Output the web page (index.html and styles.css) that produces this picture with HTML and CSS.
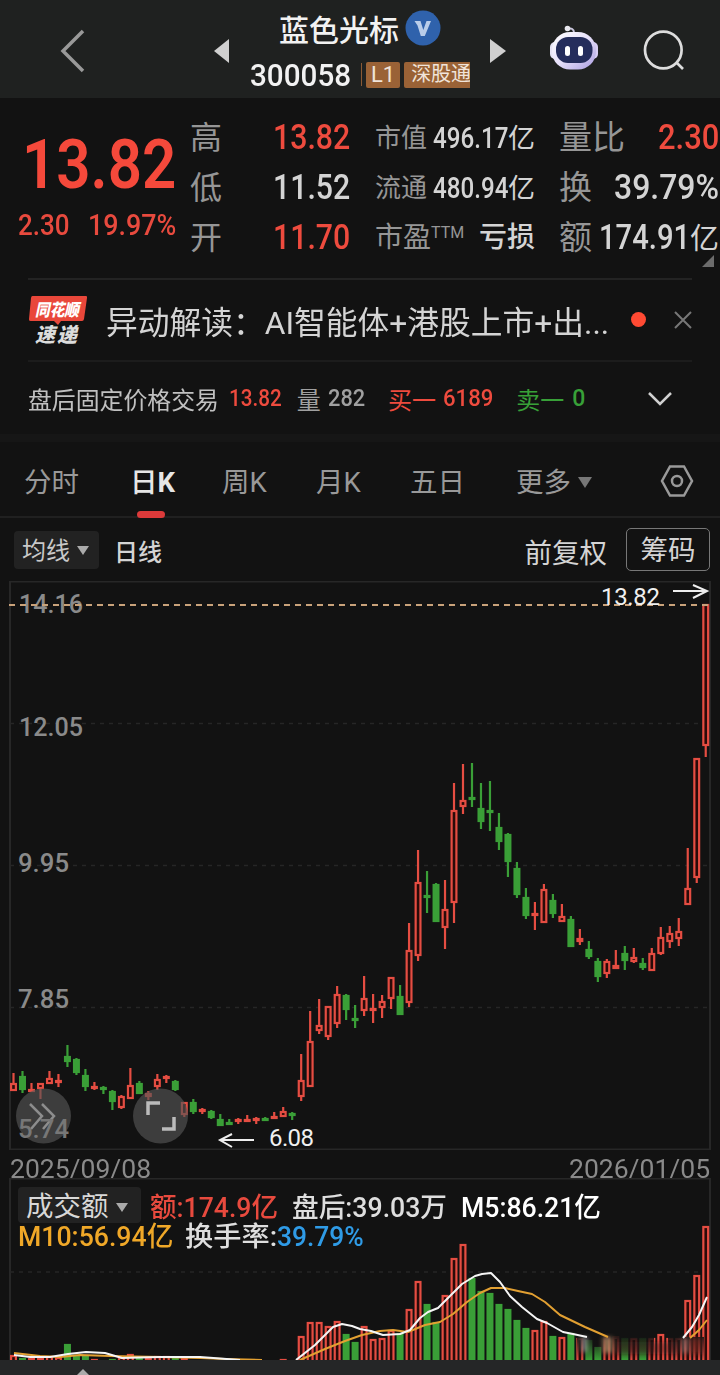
FILE: index.html
```html
<!DOCTYPE html>
<html lang="zh-CN">
    <head>
        <meta charset="utf-8">
        <title>蓝色光标 300058</title>
        <link rel="stylesheet" href="styles.css">
    </head>
    <body>
        <header class="topbar">
            <svg class="back" width="26" height="44" viewBox="0 0 26 44"><path d="M23 2L3 22L23 42"/></svg>
            <svg class="prev" width="16" height="24" viewBox="0 0 16 24"><path d="M15 0V24L0 12Z"/></svg>
            <div class="stock">
                <div class="stock-name">
                    <span class="fit" data-w="120">蓝色光标</span>
                    <svg width="36" height="36" viewBox="0 0 36 36"><circle cx="18" cy="18" r="17.500" fill="#2f62ac"/><path d="M9.500 11H15.500L18.300 20L21.500 11H26L19.800 26H15.800L12.500 15.500Z" fill="#b9cdea"/></svg>
                </div>
                <div class="stock-code">
                    <span class="fit num" data-w="101">300058</span>
                    <i class="bar"></i>
                    <span class="tag l1">L1</span>
                    <span class="tag sgt">深股通</span>
                </div>
            </div>
            <svg class="next" width="16" height="24" viewBox="0 0 16 24"><path d="M0 0V24L16 12Z"/></svg>
            <svg class="robot" width="50" height="46" viewBox="549 26 50 46">
                <defs>
                    <linearGradient id="head" x1="0" y1="0" x2="1" y2="1"><stop offset="0" stop-color="#fff"/><stop offset=".5" stop-color="#e6e0fa"/><stop offset="1" stop-color="#a99be0"/></linearGradient>
                </defs>
                <path d="M567 30Q574 28 574 34" fill="none" stroke="#c9c6dc" stroke-width="2"/>
                <circle cx="567.500" cy="29.500" r="2.800" fill="#e8e8ee"/>
                <rect x="550" y="43" width="10" height="17" rx="5" fill="#e6e3f4"/>
                <rect x="588" y="43" width="10" height="17" rx="5" fill="#d9cff5"/>
                <rect x="552" y="33" width="44" height="37.500" rx="18" fill="url(#head)"/>
                <rect x="556" y="38" width="36.500" height="26" rx="12" fill="#252d5c"/>
                <rect x="565" y="47" width="5" height="10" rx="2.500" fill="#fff"/>
                <rect x="578" y="47" width="5" height="10" rx="2.500" fill="#fff"/>
            </svg>
            <svg class="search" width="42" height="42" viewBox="643 29 42 42"><circle cx="663.300" cy="50" r="18.300"/><path d="M676 62L683 69"/></svg>
        </header>

        <section class="quote">
            <div class="price">
                <div class="now"><span class="fit num" data-w="154">13.82</span></div>
                <div class="change">
                    <span class="fit num" data-w="52">2.30</span>
                    <span class="fit num" data-w="88">19.97%</span>
                </div>
            </div>
            <dl class="cells c1">
                <dt>高</dt><dd class="up"><span class="fit num" data-w="77">13.82</span></dd>
                <dt>低</dt><dd><span class="fit num" data-w="77">11.52</span></dd>
                <dt>开</dt><dd class="up"><span class="fit num" data-w="77">11.70</span></dd>
            </dl>
            <dl class="cells c2">
                <dt>市值</dt><dd><span class="fit num" data-w="75">496.17</span>亿</dd>
                <dt>流通</dt><dd><span class="fit num" data-w="75">480.94</span>亿</dd>
                <dt class="pe">市盈<sup>TTM</sup></dt><dd class="loss">亏损</dd>
            </dl>
            <dl class="cells c3">
                <dt>量比</dt><dd class="up"><span class="fit num" data-w="61">2.30</span></dd>
                <dt>换</dt><dd><span class="fit num" data-w="105">39.79%</span></dd>
                <dt>额</dt><dd><span class="fit num" data-w="91">174.91</span>亿</dd>
            </dl>
            <i class="corner"></i>
        </section>

        <section class="notice">
            <svg width="60" height="52" viewBox="28 293 60 52">
                <path d="M32.500 295H86Q87.500 295 87 297L84 318Q83.700 320 82 320H61L58 324L54 320H30.500Q28.500 320 29 318L31 297Q31.200 295 32.500 295Z" fill="#e9473a"/>
                <text class="logo" x="35" y="314.500" textLength="44" lengthAdjust="spacingAndGlyphs" font-size="17">同花顺</text>
                <text class="logo lower" x="35" y="341" textLength="42" lengthAdjust="spacing" font-size="20">速递</text>
            </svg>
            <span class="headline"><span class="fit" data-w="503">异动解读：AI智能体+港股上市+出...</span></span>
            <i class="dot"></i>
            <svg class="close" width="18" height="18" viewBox="0 0 18 18"><path d="M1 1L17 17M17 1L1 17"/></svg>
        </section>

        <section class="after">
            <span class="fit name" data-w="191">盘后固定价格交易</span>
            <span class="fit num up a-price" data-w="53">13.82</span>
            <span class="grey a-vol">量</span>
            <span class="fit num grey" data-w="37">282</span>
            <span class="up a-buy">买一</span>
            <span class="fit num up" data-w="50">6189</span>
            <span class="down a-sell">卖一</span>
            <span class="fit num down" data-w="13">0</span>
            <svg width="24" height="16" viewBox="0 0 24 16"><path d="M1 2L12 13L23 2"/></svg>
        </section>

        <nav class="tabs">
            <span class="t1">分时</span>
            <span class="t2 on">日<b>K</b></span>
            <span class="t3">周K</span>
            <span class="t4">月K</span>
            <span class="t5">五日</span>
            <span class="t6">更多<i class="tri"></i></span>
            <svg width="34" height="32" viewBox="0 0 34 32"><path d="M10 1.500H24L32 16L24 30.500H10L2 16Z"/><circle cx="17" cy="16" r="5"/></svg>
        </nav>

        <section class="tools">
            <span class="chip">均线<i class="tri"></i></span>
            <span class="period">日线</span>
            <span class="adjust">前复权</span>
            <span class="outline">筹码</span>
        </section>

        <section class="kline">
            <svg id="kline" width="720" height="569" viewBox="0 581 720 569">
                <path class="frame" d="M10 581.500H710V1149.500H10Z"/>
                <path class="grid" d="M10 723.500H710M10 865.500H710M10 1007.500H710"/>
                <g id="candles"></g>
                <g class="round">
                    <circle cx="43.500" cy="1116" r="27.500"/>
                    <path d="M30 1104L42 1116L31 1129M42 1104L54 1116L43 1129"/>
                    <circle cx="160.500" cy="1116" r="27.500"/>
                    <path class="corners" d="M148 1115V1103H160M174 1117V1129H162"/>
                </g>
                <g class="axis">
                    <text x="19" y="613" textLength="64" lengthAdjust="spacingAndGlyphs">14.16</text>
                    <text x="19" y="736" textLength="64" lengthAdjust="spacingAndGlyphs">12.05</text>
                    <text x="18" y="872" textLength="51" lengthAdjust="spacingAndGlyphs">9.95</text>
                    <text x="18" y="1008" textLength="51" lengthAdjust="spacingAndGlyphs">7.85</text>
                    <text class="low" x="18" y="1138" textLength="51" lengthAdjust="spacingAndGlyphs">5.74</text>
                </g>
                <path class="priceline" d="M9 605H710"/>
                <g class="mark">
                    <text x="601" y="605" textLength="59">13.82</text>
                    <path d="M673 591H706M693 585L707 591L693 598"/>
                    <text x="269" y="1146" textLength="45">6.08</text>
                    <path d="M254 1140H221M232 1134L220 1140L232 1147"/>
                </g>
            </svg>
        </section>

        <div class="dates"><span class="fit num" data-w="141">2025/09/08</span><span class="fit num" data-w="141">2026/01/05</span></div>

        <section class="volume">
            <svg id="volume" width="720" height="182" viewBox="0 1178 720 182">
                <defs>
                    <linearGradient id="fade" x1="0" y1="0" x2="0" y2="1"><stop offset="0" stop-color="#121212" stop-opacity=".9"/><stop offset=".6" stop-color="#151112" stop-opacity=".4"/><stop offset="1" stop-color="#151112" stop-opacity="0"/></linearGradient>
                    <filter id="soft" x="-50%" y="-20%" width="200%" height="140%"><feGaussianBlur stdDeviation="2.500 2"/></filter>
                </defs>
                <path class="frame" d="M10 1360V1178.500H710V1360"/>
                <path class="grid" d="M10 1272H710"/>
                <g id="bars"></g>
                <rect x="577" y="1337" width="77" height="23" fill="url(#fade)"/>
                <rect x="668" y="1337" width="36" height="23" fill="url(#fade)"/>
                <g filter="url(#soft)">
                    <rect x="582" y="1337" width="5" height="15" fill="#bbb" opacity=".7"/>
                    <rect x="603" y="1337" width="9" height="16" fill="#c79a70" opacity=".7"/>
                    <rect x="683" y="1338" width="4" height="15" fill="#d99a94" opacity=".7"/>
                    <rect x="690" y="1338" width="12" height="16" fill="#8a2a20" opacity=".5"/>
                    <rect x="615" y="1342" width="62" height="12" fill="#401214" opacity=".4"/>
                </g>
                <polyline class="ma10" points="14,1353 40,1356 60,1357 80,1355 110,1356 160,1357 200,1358 225,1359 262,1360"/>
                <polyline class="ma10" points="300,1360 325,1349 345,1341 362,1335 380,1331 393,1330 408,1332 425,1325 440,1322 453,1314 467,1302 480,1293 491,1288 505,1288 518,1291 532,1294 545,1302 560,1315 585,1327 608,1337"/>
                <polyline class="ma10" points="690,1338 699,1330 707,1320"/>
                <polyline class="ma5" points="14,1355 30,1357 50,1357 68,1354 86,1352 105,1353 122,1358 160,1357 200,1357 240,1360"/>
                <polyline class="ma5" points="296,1360 315,1345 333,1327 342,1324 352,1326 360,1329 371,1331 383,1335 400,1334 410,1330 420,1318 428,1312 438,1308 450,1296 462,1284 475,1276 482,1274 491,1273 500,1282 510,1296 522,1307 537,1319 547,1323 563,1332 573,1334 587,1337"/>
                <polyline class="ma5" points="683,1338 692,1327 699,1315 707,1297"/>
            </svg>
            <div class="legend">
                <div class="row">
                    <span class="chip">成交额<i class="tri"></i></span>
                    <span class="fit up" data-w="128">额:174.9亿</span>
                    <span class="fit" data-w="155">盘后:39.03万</span>
                    <span class="fit white" data-w="140">M5:86.21亿</span>
                </div>
                <div class="row second">
                    <span class="fit gold" data-w="155">M10:56.94亿</span>
                    <div>
                        <span class="fit" data-w="92">换手率:</span><span class="fit blue" data-w="87">39.79%</span>
                    </div>
                </div>
            </div>
        </section>
        <footer class="sheet"><i></i></footer>
        <script src="chart.js"></script>
    </body>
</html>
```
FILE: styles.css
```css
body{
    margin: 0;
    width: 720px;
    height: 1375px;
    overflow: hidden;
    background: #121212;
    color: #d4d4d4;
    font-family: Roboto, "Noto Sans CJK SC", sans-serif;
    font-size: 25px;
}
section, header, nav, div, footer{
    box-sizing: border-box;
}
svg{
    display: block;
    flex: none;
}
span{
    white-space: nowrap;
}
.fit{
    display: inline-block;
    flex: none;
    transform-origin: 0 50%;
}
.num{
    font-family: Roboto, sans-serif;
}
.up{
    color: #ee4b3e;
}
.down{
    color: #38a038;
}
.grey{
    color: #a0a0a0;
}

/* header */
.topbar{
    height: 98px;
    background: #1f2120;
    display: flex;
    align-items: center;
    padding-top: 3px;
}
.back{
    margin-left: 60px;
    fill: none;
    stroke: #999;
    stroke-width: 3.5;
}
.prev{
    margin-left: 128px;
    fill: #d0d0d0;
}
.stock{
    width: 220px;
    margin-left: 20px;
    overflow: hidden;
}
.stock-name{
    display: flex;
    align-items: center;
    height: 43px;
    padding-left: 29px;
    padding-top: 3px;
    box-sizing: border-box;
    gap: 6px;
    font-size: 30px;
    font-weight: 500;
    color: #f2f2f2;
}
.stock-code{
    display: flex;
    align-items: center;
    height: 48px;
    color: #f2f2f2;
    font-size: 32px;
    font-weight: 500;
    padding-top: 5px;
}
.bar{
    flex: none;
    width: 1px;
    height: 23px;
    background: #8a5a35;
    margin-left: 10px;
}
.tag{
    background: #9a6236;
    color: #f0e4da;
    font-size: 20px;
    font-weight: 400;
    height: 26px;
    line-height: 25px;
    border-radius: 2px;
    text-align: center;
    flex: none;
}
.l1{
    width: 34px;
    margin-left: 4px;
    font-size: 22px;
}
.sgt{
    width: 72px;
    margin-left: 4px;
    padding-left: 7px;
    box-sizing: border-box;
    text-align: left;
}
.next{
    margin-left: 20px;
    fill: #d0d0d0;
}
.robot{
    margin-left: 43px;
    margin-top: -5px;
}
.search{
    margin-left: 44px;
    margin-top: -2px;
    fill: none;
    stroke: #ddd;
    stroke-width: 2.7;
}

/* quote */
.quote{
    position: relative;
    height: 180px;
    display: flex;
    padding-top: 15px;
}
.price{
    width: 190px;
    flex: none;
    color: #f5493b;
}
.now{
    font-size: 69px;
    font-weight: 600;
    line-height: 70px;
    padding: 17px 0 0 22px;
}
.change{
    display: flex;
    gap: 18px;
    font-size: 29px;
    font-weight: 500;
    line-height: 36px;
    padding: 7px 0 0 18px;
    color: #e84a3e;
}
/* labels hang out of a zero track so long values can use the full width */
.cells{
    margin: 0;
    display: grid;
    grid-auto-rows: 50px;
    grid-template-columns: 0 1fr;
    line-height: 50px;
    flex: none;
}
.cells dt{
    color: #969696;
    white-space: nowrap;
}
.cells dd{
    margin: 0;
    text-align: right;
    white-space: nowrap;
}
.cells .num{
    font-weight: 500;
}
.c1{
    width: 160px;
    font-size: 32px;
}
.c1 .num{
    font-size: 35px;
}
.c2{
    width: 160px;
    margin-left: 25px;
    font-size: 26px;
}
.c2 .num{
    font-size: 29px;
}
.c2 dd{
    font-size: 27px;
}
.c2 .pe{
    font-size: 28px;
}
.c2 .loss{
    font-size: 28px;
    font-weight: 500;
}
.c2 sup{
    font-size: 16px;
    line-height: 0;
    vertical-align: 9px;
}
.c3{
    width: 160px;
    margin-left: 24px;
    font-size: 33px;
}
.c3 dd{
    font-size: 29px;
}
.c3 .num{
    font-size: 35px;
}
.corner{
    position: absolute;
    right: 6px;
    bottom: 11px;
    border-left: 12px solid transparent;
    border-bottom: 12px solid #6c6c6c;
}

/* notice */
.notice{
    height: 84px;
    margin: 0 28px;
    border-top: 2px solid #232323;
    border-bottom: 2px solid #1c1c1c;
    display: flex;
    align-items: center;
}
.logo{
    font-family: "Noto Sans CJK SC", sans-serif;
    font-weight: 900;
    font-style: italic;
    fill: #fff;
}
.lower{
    fill: #dcdcdc;
}
.headline{
    margin-left: 18px;
    width: 507px;
    font-size: 32px;
}
.dot{
    width: 15px;
    height: 15px;
    border-radius: 50%;
    background: #ff4a33;
    margin: -2px 0 0 18px;
}
.close{
    margin-left: 28px;
    fill: none;
    stroke: #777;
    stroke-width: 2;
}

/* after hours */
.after{
    height: 80px;
    padding: 1px 0 0 28px;
    border-bottom: 8px solid #161616;
    display: flex;
    align-items: center;
    font-size: 24px;
}
.after .num{
    font-size: 23px;
    font-weight: 500;
}
.after .name{
    color: #c0c0c0;
}
.a-price{
    margin-left: 10px;
}
.a-vol{
    margin: 0 7px 0 15px;
}
.a-buy{
    margin: 0 7px 0 23px;
}
.a-sell{
    margin: 0 8px 0 23px;
}
.after svg{
    margin-left: 63px;
    fill: none;
    stroke: #d0d0d0;
    stroke-width: 2.5;
}

/* tabs */
.tabs{
    height: 76px;
    border-bottom: 2px solid #202020;
    display: flex;
    align-items: stretch;
    line-height: 81px;
    font-size: 27.5px;
    color: #999;
    padding-left: 24px;
}
.tabs span{
    flex: none;
}
.tabs .on{
    color: #e6e6e6;
    font-weight: 500;
}
.on::after{
    content: "";
    display: block;
    width: 28px;
    height: 7px;
    border-radius: 3.5px;
    background: #dc3a3a;
    margin: -12px 0 0 7px;
}
.t1{ width: 106px; }
.t2{ width: 92px; }
.t3{ width: 94px; }
.t4{ width: 94px; }
.t5{ width: 106px; }
.t6{ width: 144px; }
.tri{
    display: inline-block;
    border: 7px solid transparent;
    border-top: 11px solid #777;
    border-bottom: 0;
    margin-left: 7px;
    vertical-align: 4px;
}
.tabs svg{
    margin-top: 23px;
    fill: none;
    stroke: #999;
    stroke-width: 2.5;
}

/* toolbar above the chart */
.tools{
    height: 63px;
    display: flex;
    align-items: center;
    padding: 0 10px 0 14px;
    font-size: 24px;
}
.chip{
    background: #222;
    border-radius: 4px;
    height: 38px;
    line-height: 40px;
    width: 85px;
    padding-left: 8px;
    box-sizing: border-box;
    color: #c8c8c8;
}
.chip .tri{
    border-width: 9px 6px 0;
    border-top-color: #aaa;
}
.period{
    margin: 2px 0 0 15px;
    font-weight: 500;
    flex: 1;
}
.adjust{
    font-size: 27.5px;
    margin-top: 3px;
}
.outline{
    margin-left: 19px;
    width: 84px;
    height: 43px;
    line-height: 44px;
    box-sizing: border-box;
    border: 1.5px solid #777;
    border-radius: 5px;
    font-size: 27.5px;
    text-align: center;
}

/* charts */
.frame{
    fill: none;
    stroke: #272727;
    stroke-width: 2;
}
.grid{
    stroke: #262626;
    stroke-width: 1.5;
    stroke-dasharray: 4 5;
}
.priceline{
    stroke: #c9a27a;
    stroke-width: 1.8;
    stroke-dasharray: 6 5;
}
.axis{
    fill: #8a8a8a;
    font-size: 26px;
    font-weight: 500;
}
.axis .low{
    fill: #777;
}
.mark text{
    fill: #f0f0f0;
    font-size: 24px;
}
.mark path{
    fill: none;
    stroke: #eee;
    stroke-width: 2;
}
.round circle{
    fill: #555;
    fill-opacity: .65;
}
.round path{
    fill: none;
    stroke: #8d8d8d;
    stroke-width: 2.5;
}
.round .corners{
    stroke: #bbb;
    stroke-width: 3.5;
}
.red{
    fill: #2a0b09;
    stroke: #e54d42;
    stroke-width: 2.2;
}
.green{
    fill: #3a9f37;
    stroke: #3a9f37;
    stroke-width: 2.2;
}
.dates{
    height: 28px;
    display: flex;
    justify-content: space-between;
    padding: 3px 10px 0;
    font-size: 25px;
    line-height: 34px;
    color: #8a8a8a;
}
.volume{
    position: relative;
    height: 182px;
}
.ma5, .ma10{
    fill: none;
    stroke: #f5f5f5;
    stroke-width: 2;
    stroke-linejoin: round;
}
.ma10{
    stroke: #e2a032;
}
.legend{
    position: absolute;
    left: 18px;
    top: 9px;
    font-size: 27px;
    font-weight: 500;
    color: #dedede;
}
.legend .row{
    display: flex;
    align-items: center;
    height: 36px;
    gap: 14px;
}
.legend .chip{
    width: 123px;
    height: 36px;
    margin-right: -5px;
    color: #d8d8d8;
    font-size: 27.5px;
    font-weight: 400;
}
.legend .second{
    height: 23px;
    gap: 12px;
}
.gold{
    color: #f0a828;
}
.blue{
    color: #2f9be6;
}
.legend .up{
    color: #e84a3e;
}
.white{
    color: #fff;
}
.sheet{
    height: 15px;
    background: #252627;
    padding: 9px 0 0 77px;
}
.sheet i{
    display: block;
    width: 0;
    border: 6px solid transparent;
    border-top: 0;
    border-bottom: 6px solid #aaa;
}
```
FILE: chart.js
```javascript
// high, open/close top, open/close bottom, low, rising?
var candles=[
    [1073,1083,1091,1091,1],[1071,1076,1090,1093,0],[1083,1089,1092,1092,1],[1083,1083,1089,1099,1],
    [1071,1078,1084,1084,1],[1074,1080,1082,1087,1],[1045,1056,1062,1067,0],[1058,1059,1073,1075,0],
    [1069,1075,1087,1091,0],[1082,1086,1088,1090,1],[1086,1087,1090,1094,0],[1090,1091,1102,1110,0],
    [1095,1096,1108,1109,1],[1068,1085,1099,1099,1],[1081,1083,1094,1094,0],[1091,1093,1097,1100,1],
    [1074,1079,1087,1090,1],[1075,1076,1078,1083,1],[1080,1081,1090,1091,0],[1102,1102,1115,1117,1],
    [1099,1102,1112,1114,0],[1108,1109,1112,1114,1],[1110,1111,1118,1119,0],[1114,1119,1126,1126,0],
    [1119,1122,1123,1125,0],[1118,1119,1122,1124,1],[1115,1119,1122,1122,1],[1117,1118,1120,1124,1],
    [1117,1118,1119,1120,0],[1112,1116,1118,1118,1],[1107,1111,1117,1117,1],[1112,1113,1116,1120,0],
    [1054,1080,1097,1101,1],[1011,1041,1087,1087,1],[999,1025,1031,1034,1],[1006,1006,1037,1040,1],
    [986,994,1024,1028,1],[994,995,1010,1020,0],[1005,1018,1020,1028,0],[976,998,1011,1016,1],
    [994,1008,1010,1023,1],[995,1001,1008,1018,1],[977,977,999,1009,1],[985,996,1015,1015,0],
    [923,950,1003,1007,1],[850,882,956,961,1],[871,895,896,913,0],[883,884,922,922,0],
    [880,909,928,949,1],[783,810,903,923,1],[764,800,807,814,1],[763,797,798,807,0],
    [783,808,822,829,0],[781,810,812,831,0],[813,827,842,850,0],[833,834,862,877,0],
    [862,868,895,898,0],[888,897,916,919,0],[902,913,915,930,1],[884,889,923,923,1],
    [894,900,914,918,0],[904,916,922,922,1],[916,919,947,947,0],[929,938,942,945,1],
    [941,949,957,959,0],[958,961,977,982,0],[959,961,974,978,1],[950,965,969,969,1],
    [946,953,961,970,0],[948,957,962,963,1],[958,963,968,970,0],[948,953,971,971,1],
    [927,937,954,955,1],[926,933,942,948,1],[918,931,939,946,1],[848,888,905,905,1],
    [758,758,878,883,1],[604,604,746,757,1]
]
// top of every turnover bar
var tops=[1355,1358,1358,1358,1356,1357,1344,1355,1356,1359,1360,1359,1357,1354,1357,1358,1356,1356,1357,1358,
    1360,1360,1360,1360,1360,1360,1360,1360,1360,1360,1359,1360,1336,1322,1322,1326,1321,1334,1342,1326,
    1339,1338,1330,1333,1309,1281,1304,1322,1295,1258,1244,1278,1291,1293,1304,1309,1320,1328,1330,1321,
    1336,1337,1333,1338,1340,1347,1337,1337,1338,1338,1338,1338,1334,1338,1338,1300,1275,1226]
var x0=13.5
var step=8.99

function drawCandles(){
    var html=''
    for (var i=0;i<candles.length;i++){
        var c=candles[i]
        var x=x0+i*step
        var h=Math.max(c[2]-c[1]-2,1)
        html+='<g class="'+(c[4]?'red':'green')+'">'
        html+='<path d="M'+x+' '+c[0]+'V'+c[3]+'"/>'
        html+='<rect x="'+(x-2.4)+'" y="'+(c[1]+1)+'" width="4.8" height="'+h+'"/></g>'
    }
    document.getElementById('candles').innerHTML=html
}
function drawBars(){
    var html=''
    for (var i=0;i<tops.length;i++){
        if (tops[i]>=1360) continue
        var x=x0+i*step
        html+='<rect class="'+(candles[i][4]?'red':'green')+'" x="'+(x-2.4)+'" y="'+(tops[i]+1)+'" width="4.8" height="'+(1362-tops[i])+'"/>'
    }
    document.getElementById('bars').innerHTML=html
}
// squeeze each label into its own column width
function fitText(){
    document.querySelectorAll('.fit').forEach(function(el){
        var natural=el.offsetWidth
        var w=parseFloat(el.dataset.w)
        el.style.transform='scaleX('+w/natural+')'
        el.style.marginRight=(w-natural)+'px'
    })
}
drawCandles()
drawBars()
fitText()
```
